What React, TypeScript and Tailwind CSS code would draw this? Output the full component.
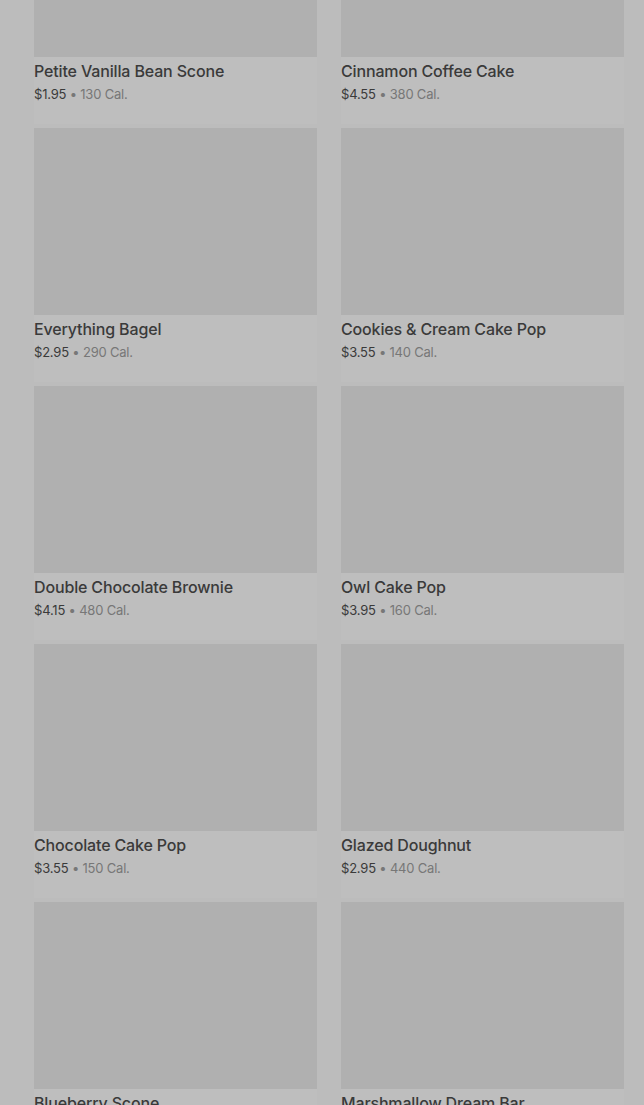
const items = [
    { name: 'Petite Vanilla Bean Scone', price: '$1.95', cal: '130 Cal.' },
    { name: 'Cinnamon Coffee Cake', price: '$4.55', cal: '380 Cal.' },
    { name: 'Everything Bagel', price: '$2.95', cal: '290 Cal.' },
    { name: 'Cookies & Cream Cake Pop', price: '$3.55', cal: '140 Cal.' },
    { name: 'Double Chocolate Brownie', price: '$4.15', cal: '480 Cal.' },
    { name: 'Owl Cake Pop', price: '$3.95', cal: '160 Cal.' },
    { name: 'Chocolate Cake Pop', price: '$3.55', cal: '150 Cal.' },
    { name: 'Glazed Doughnut', price: '$2.95', cal: '440 Cal.' },
    { name: 'Blueberry Scone', price: '$3.25', cal: '380 Cal.' },
    { name: 'Marshmallow Dream Bar', price: '$2.75', cal: '210 Cal.' },
]

const App = () => {
    return (
        <div className="h-[1105px] overflow-hidden bg-[#bcbcbc] font-['Inter',sans-serif]">
            <div className="-mt-[130px] grid grid-cols-2 gap-x-[24px] gap-y-[4px] pl-[34px] pr-[20px]">
                {items.map((item) => (
                    <div key={item.name} className="bg-[#bebebe] h-[254px]">
                        <div className="h-[187px] bg-[#b0b0b0]" />
                        <p className="mt-[3px] text-[16px] leading-[22px] font-medium text-[#3a3a3a] tracking-[-0.15px]">
                            {item.name}
                        </p>
                        <p className="mt-[3px] text-[13px] leading-[18px] text-[#3a3a3a] tracking-[-0.2px]">
                            {item.price}
                            <span className="text-[#777777]"> • {item.cal}</span>
                        </p>
                    </div>
                ))}
            </div>
        </div>
    )
}

export default App
